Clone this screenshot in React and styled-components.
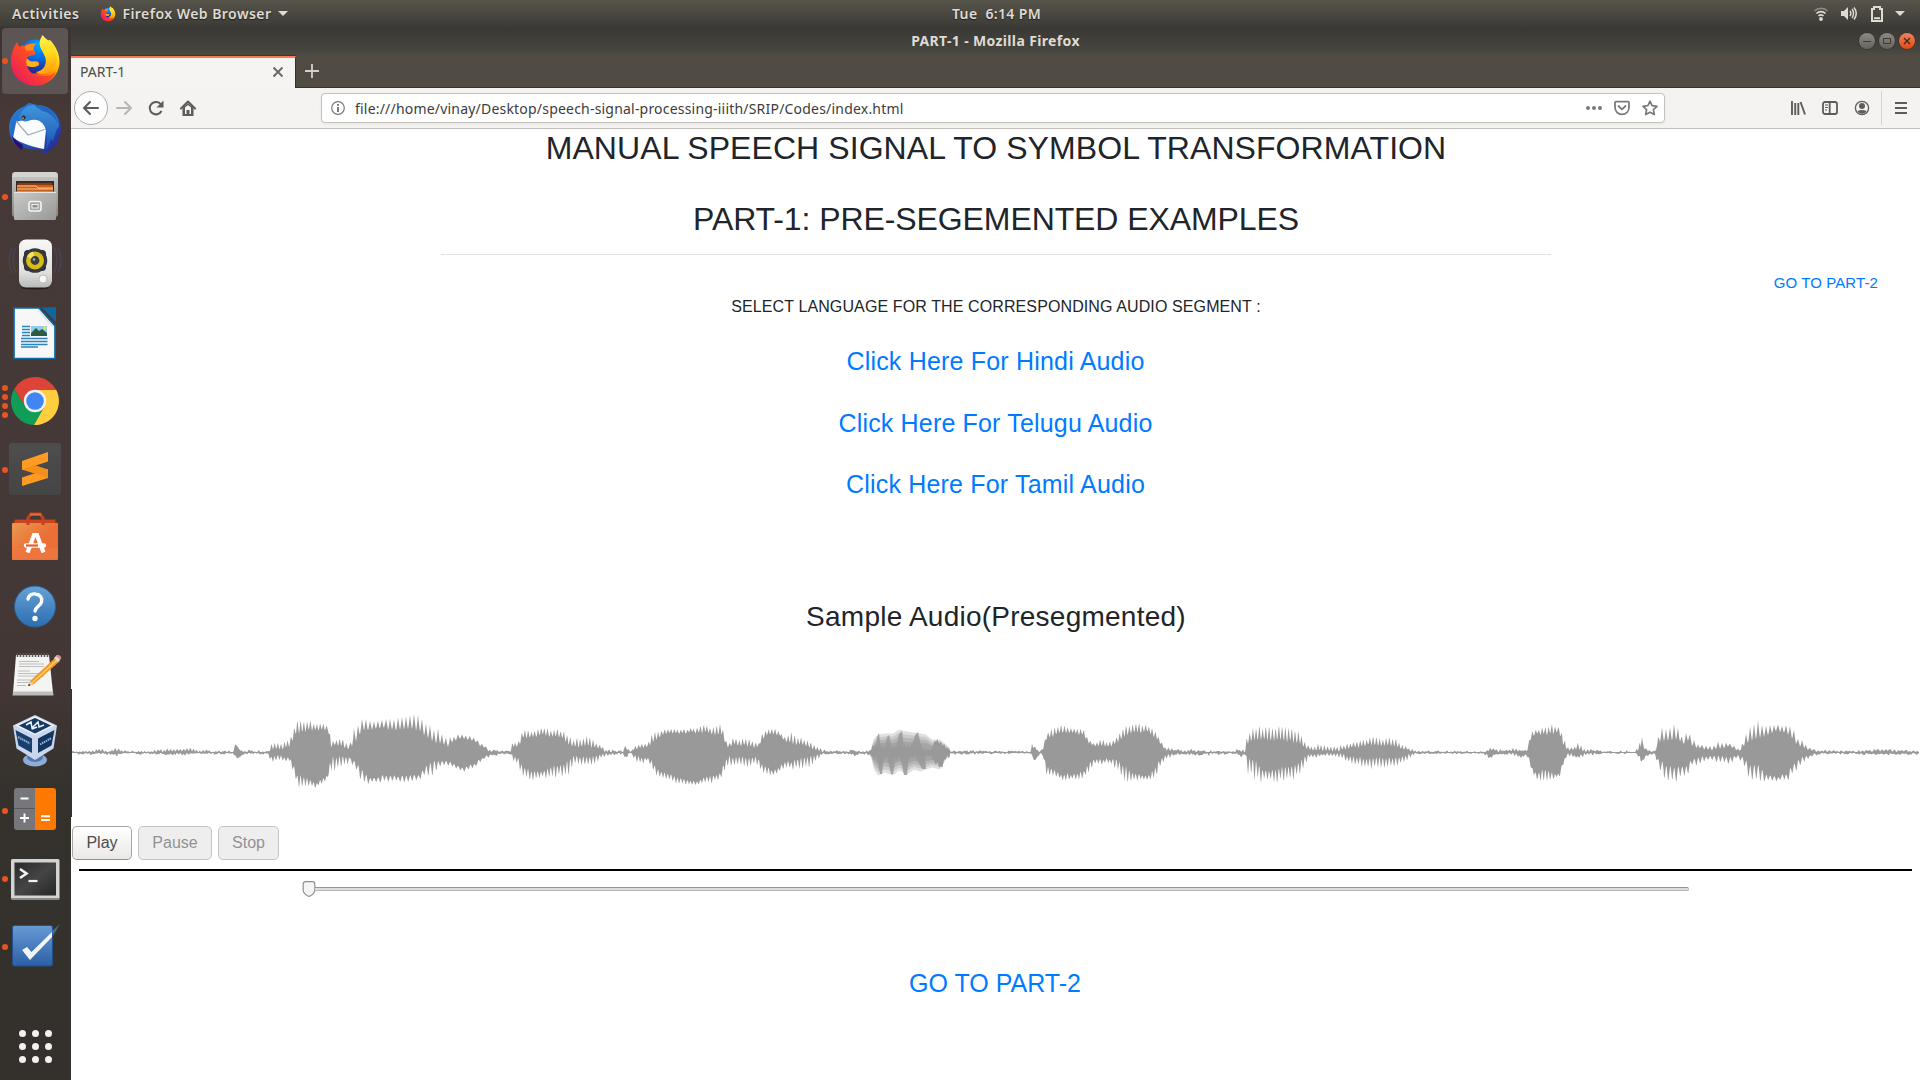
import React from 'react';
import styled, { createGlobalStyle, css } from 'styled-components';

const UI_FONT = '"Noto Sans", "Open Sans", sans-serif';
const PAGE_FONT = '"Liberation Sans", Arial, sans-serif';

const GlobalStyle = createGlobalStyle`
  *, *::before, *::after { box-sizing: border-box; }
  html, body { margin: 0; padding: 0; }
  body { width: 1920px; height: 1080px; overflow: hidden; background: #fff; }
`;

const Desktop = styled.div`
  display: flex;
  flex-direction: column;
  width: 1920px;
  height: 1080px;
  overflow: hidden;
  font-family: ${UI_FONT};
`;

/* ---------- GNOME top bar ---------- */
const TopBar = styled.header`
  display: grid;
  grid-template-columns: 940px auto 1fr;
  align-items: center;
  height: 27px;
  flex: none;
  padding: 0 15px 0 12px;
  background: linear-gradient(#57544a, #3c3b37);
  color: #dfdbd2;
  font-size: 14px;
  font-weight: 600;
  text-shadow: 0 1px 1px rgba(0, 0, 0, 0.5);
`;
const TopGroup = styled.div`
  display: flex;
  align-items: center;
  justify-content: ${(p) => (p.$end ? 'flex-end' : 'flex-start')};
  gap: ${(p) => p.$gap || 0}px;
`;
const Label = styled.span`
  white-space: pre;
  line-height: 20px;
  letter-spacing: ${(p) => p.$track || 0}px;
`;
const AppMenu = styled.div`
  display: flex;
  align-items: center;
  gap: 6px;
  margin-left: 21px;
`;

const Body = styled.div`
  display: flex;
  flex: 1;
  min-height: 0;
`;

/* ---------- Dock ---------- */
const Dock = styled.nav`
  display: flex;
  flex-direction: column;
  width: 71px;
  flex: none;
  background: linear-gradient(#3d3331 0, #463937 90px, #453938 45%, #433735 62%, #35322d 72%, #34312d 100%);
`;
const DockItem = styled.div`
  display: flex;
  align-items: center;
  height: 68.2px;
  flex: none;
  padding: 1px 0 1.2px 2px;
`;
const DockTile = styled.div`
  display: flex;
  align-items: center;
  width: 66px;
  height: 66px;
  border-radius: 4px;
  background: ${(p) => (p.$active ? '#5d5553' : 'transparent')};
`;
const Dots = styled.div`
  display: flex;
  flex-direction: column;
  gap: 3px;
  width: 6px;
`;
const Dot = styled.i`
  width: 6px;
  height: 6px;
  border-radius: 50%;
  background: #e95420;
`;
const IconBox = styled.svg`
  width: 54px;
  height: 54px;
  flex: none;
  overflow: visible;
`;
const AppGrid = styled.div`
  display: grid;
  grid-template-columns: repeat(3, 7px);
  gap: 6px;
  margin: auto auto 17.5px 18.5px;
`;
const GridDot = styled.i`
  width: 7px;
  height: 7px;
  border-radius: 50%;
  background: #f2f1f0;
`;

/* ---------- Browser ---------- */
const Browser = styled.main`
  display: flex;
  flex-direction: column;
  flex: 1;
  min-width: 0;
`;
const TitleBar = styled.div`
  display: grid;
  grid-template-columns: 1fr auto 1fr;
  align-items: center;
  height: 28px;
  flex: none;
  padding: 0 5px 0 5px;
  background: linear-gradient(#393834, #45443f 80%, #4f4b43);
  color: #dfdbd2;
  font-size: 14px;
  font-weight: 700;
`;
const WindowButtons = styled.div`
  grid-column: 3;
  display: flex;
  justify-content: flex-end;
  gap: 4px;
`;
const WindowButton = styled.span`
  width: 16px;
  height: 16px;
  border-radius: 50%;
  background: ${(p) => (p.$close ? 'linear-gradient(#f4815c, #df4b16)' : 'linear-gradient(#8c8a83, #65635c)')};
  box-shadow: 0 0 0 0.6px #2d2c28;
  svg { display: block; }
`;
const TabStrip = styled.div`
  display: flex;
  height: 33px;
  flex: none;
  background: #504c44;
`;
const Tab = styled.div`
  display: flex;
  align-items: center;
  justify-content: space-between;
  width: 225px;
  margin-top: 1px;
  padding: 0 11px 2px 9px;
  border-top: 2px solid #f67c54;
  border-right: 1px solid #33322e;
  background: #f5f4f2;
  box-shadow: 0 -1px 0 #393733;
  color: #4c4c4c;
  font-size: 14px;
`;
const NewTab = styled.div`
  display: flex;
  flex: 1;
  align-items: center;
  padding: 0 0 1px 8px;
  border-bottom: 1px solid #33322e;
`;
const Toolbar = styled.div`
  display: flex;
  align-items: center;
  height: 41px;
  flex: none;
  padding: 0 0 1px 3px;
  background: #f4f3f1;
  border-bottom: 1px solid #c2beb9;
`;
const BackButton = styled.span`
  display: grid;
  place-items: center;
  width: 34px;
  height: 34px;
  border: 1px solid #b1aeab;
  border-radius: 50%;
  background: #fdfdfd;
`;
const NavIcons = styled.div`
  display: flex;
  gap: 16px;
  margin-left: 8px;
`;
const AddressBar = styled.div`
  display: flex;
  align-items: center;
  width: 1344px;
  height: 30px;
  margin-left: 125px;
  padding: 0 6px 0 9px;
  border: 1px solid #c5c1bc;
  border-radius: 4px;
  background: #fff;
  color: #3c3c3c;
  font-size: 14px;
  box-shadow: 0 1px 3px rgba(0, 0, 0, 0.06);
  svg { flex: none; }
`;
const Url = styled(Label)`
  flex: 1;
  margin-left: 10px;
  padding-top: 2px;
`;
const BarIcons = styled.div`
  display: flex;
  gap: 12px;
`;
const ToolIcons = styled.div`
  display: flex;
  gap: 16px;
  margin-left: 125px;
`;
const MenuButton = styled.div`
  display: flex;
  align-items: center;
  height: 34px;
  margin-left: 11px;
  padding-left: 12px;
  border-left: 1px solid #d5d3d0;
`;

/* ---------- Page ---------- */
const Page = styled.section`
  flex: 1;
  min-height: 0;
  overflow: hidden;
  padding-left: 1px;
  background: #fff;
  color: #212529;
  font-family: ${PAGE_FONT};
  text-align: center;
`;
const Heading = styled.h2`
  height: 38px;
  margin: 0 0 33px;
  font-size: 32px;
  font-weight: 400;
  line-height: 38px;
  letter-spacing: ${(p) => p.$track || 0}px;
`;
const Divider = styled.hr`
  width: 1110px;
  height: 1px;
  margin: -17px auto 0;
  border: 0;
  background: #e2e2e3;
`;
const linkText = css`
  color: #007bff;
  text-decoration: none;
`;
const CornerRow = styled.div`
  display: flex;
  justify-content: flex-end;
  height: 18px;
  margin-top: 19px;
  padding-right: 42px;
`;
const CornerLink = styled.a`
  ${linkText}
  font-size: 15px;
  line-height: 18px;
  letter-spacing: 0.1px;
`;
const Prompt = styled.p`
  margin: 3px 0 0;
  font-size: 16px;
  line-height: 24px;
  letter-spacing: 0.11px;
`;
const LinkList = styled.ul`
  display: flex;
  flex-direction: column;
  gap: 32.6px;
  margin: 28px 1px 0 0;
  padding: 0;
  list-style: none;
`;
const BigLink = styled.a`
  ${linkText}
  display: block;
  font-size: 25px;
  line-height: 29px;
  letter-spacing: ${(p) => p.$track || 0}px;
`;
const SampleTitle = styled.h3`
  margin: 101px 0 0;
  font-size: 28px;
  font-weight: 400;
  line-height: 34px;
  letter-spacing: 0.24px;
`;
const Wave = styled.div`
  height: 128px;
  margin: 54.8px 0 0 -1px;
  border-left: 1px solid #333;
  svg { display: block; }
`;
const Controls = styled.div`
  display: flex;
  gap: 6px;
  margin-top: 9px;
`;
const ControlButton = styled.button`
  width: ${(p) => p.$width}px;
  height: 34px;
  padding: 0;
  border: 1px solid #a9a6a2;
  border-bottom-color: #918e8a;
  border-radius: 5px;
  background: linear-gradient(#fff, #ebe9e6);
  color: #4c4c4c;
  font: 16px/24px ${PAGE_FONT};
  &:disabled {
    border-color: #c6c5c4;
    background: #eeeeee;
    color: #929292;
  }
`;
const Rule = styled.hr`
  height: 2px;
  margin: 9px 8px 0 7px;
  border: 0;
  background: #000;
`;
const Slider = styled.div`
  display: flex;
  align-items: center;
  width: 1387px;
  height: 16px;
  margin: 10px 0 0 230px;
`;
const Thumb = styled.svg`
  flex: none;
  width: 14px;
  height: 16px;
`;
const Track = styled.div`
  flex: 1;
  height: 4px;
  margin-left: -1px;
  border: 1px solid #b8b8b8;
  border-top-color: #949494;
  border-left: 0;
  border-radius: 0 2px 2px 0;
  background: #dcdcdc;
`;
const Footer = styled.footer`
  margin: 72px 2px 0 0;
`;

/* ---------- Wave form ---------- */
/* x, up peak, up body, down peak, down body */
const ENVELOPE = [
  [72, 2, 1, 1, 1], [76, 1, 0, 1, 1], [90, 2, 1, 2, 1], [103, 3, 1, 1, 1], [107, 1, 0, 2, 1], [116, 4, 2, 3, 2], [124, 2, 1, 1, 1],
  [150, 1.5, 0, 2, 1], [162, 3, 1, 1.5, 1], [183, 3, 1, 3, 1], [191, 4, 1, 1, 1], [210, 1.5, 0.5, 1.5, 0.5], [233, 1, 0.5, 1, 0.5],
  [235, 7, 6, 3, 2], [237, 8, 7, 6, 5], [239, 3, 2, 5, 4], [242, 2, 1, 4, 3], [245, 1, 0.5, 1, 0.5], [250, 3, 2, 1, 0.5],
  [256, 1, 0.5, 2, 1], [268, 1, 0.5, 1, 0.5], [271, 8, 3, 10, 3], [276, 10, 4, 8, 3], [282, 9, 4, 7, 4], [289, 12, 6, 9, 5],
  [293, 20, 14, 18, 12], [297, 31, 22, 32, 24], [300, 30, 21, 35, 24], [310, 30, 25, 33, 30], [316, 28, 24, 35, 32],
  [322, 30, 25, 32, 29], [328, 27, 24, 25, 24], [331, 13, 5, 17, 4], [334, 10, 7, 18, 5], [341, 14, 8, 14, 4], [349, 7, 3, 11, 4],
  [354, 21, 9, 12, 8], [358, 25, 16, 24, 13], [363, 33, 24, 29, 20], [370, 30, 25, 31, 27], [382, 31, 27, 28, 25],
  [397, 34, 24, 29, 25], [410, 36, 27, 29, 24], [418, 34, 24, 27, 24], [425, 31, 18, 23, 15], [432, 23, 12, 24, 9],
  [440, 20, 9, 15, 9], [448, 12, 7, 12, 8], [454, 16, 13, 16, 12], [464, 18, 15, 18, 16], [474, 14, 12, 15, 12],
  [483, 8, 6, 7, 5], [489, 3, 1, 5, 3], [500, 2, 1, 2, 1], [510, 1, 0.5, 1, 0.5], [513, 11, 6, 8, 2], [518, 10, 6, 12, 6],
  [523, 23, 15, 24, 15], [533, 21, 17, 27, 20], [542, 24, 19, 25, 20], [553, 23, 17, 24, 13], [562, 21, 16, 24, 14],
  [568, 18, 9, 22, 8], [573, 12, 6, 12, 4], [590, 15, 6, 12, 5], [594, 12, 5, 11, 3], [599, 8, 4, 7, 2], [606, 3, 1, 4, 1],
  [612, 2, 1, 3, 1], [618, 1, 0.5, 1, 0.5], [623, 1, 1, 1, 1], [625, 6, 5, 7, 5], [630, 1, 1, 1, 0.5], [637, 7, 4, 9, 3],
  [643, 9, 5, 10, 6], [648, 8, 6, 7, 5], [652, 18, 10, 18, 9], [658, 21, 15, 23, 18], [668, 24, 22, 27, 23], [680, 23, 21, 31, 27],
  [697, 24, 22, 32, 31], [705, 28, 22, 29, 25], [712, 24, 20, 30, 25], [721, 28, 20, 25, 21], [725, 15, 10, 19, 7],
  [728, 8, 5, 13, 4], [734, 14, 8, 12, 5], [744, 13, 7, 14, 5], [756, 10, 5, 11, 4], [759, 9, 6, 13, 8], [763, 21, 15, 20, 13],
  [772, 24, 21, 23, 19], [780, 20, 18, 19, 15], [786, 14, 11, 15, 9], [792, 19, 9, 16, 9], [800, 14, 8, 16, 6],
  [809, 11, 6, 14, 4], [817, 6, 2, 8, 2], [823, 2, 1, 2, 1], [830, 1, 0.5, 1, 0.5], [837, 1.5, 1, 1, 0.5], [849, 1, 0.5, 1, 0.5],
  [851, 5, 3, 2, 1], [855, 1, 0.5, 4, 3], [860, 1, 0.5, 2, 1], [869, 2, 1, 3, 1], [873, 7, 5, 8, 3], [877, 7, 4, 8, 4],
  [888, 6, 4, 7, 4], [900, 8, 5, 8, 4], [920, 7, 4, 6, 4], [931, 3, 2, 4, 2], [935, 13, 12, 12, 9], [941, 11, 9, 17, 14],
  [946, 7, 3, 7, 4], [950, 2, 1, 4, 1], [953, 1, 0.5, 1, 0.5], [962, 1.5, 1, 2, 1], [980, 1.5, 0.5, 1, 0.5], [1030, 0.8, 0.4, 0.8, 0.4],
  [1032, 8, 4, 3, 2], [1035, 5, 4, 10, 8], [1040, 1, 0.5, 1, 0.5], [1043, 5, 4, 4, 3], [1047, 19, 15, 24, 14],
  [1052, 23, 17, 23, 17], [1061, 27, 22, 27, 23], [1072, 24, 22, 27, 23], [1084, 23, 19, 26, 20], [1089, 12, 9, 18, 9],
  [1095, 8, 6, 11, 7], [1102, 14, 7, 12, 7], [1110, 10, 5, 10, 7], [1117, 16, 11, 15, 8], [1125, 25, 17, 29, 14],
  [1133, 29, 22, 27, 22], [1147, 26, 22, 27, 25], [1156, 21, 15, 24, 16], [1160, 12, 9, 13, 7], [1165, 6, 3, 8, 3],
  [1172, 4, 2, 4, 1], [1181, 2, 1, 2, 1], [1192, 3, 1, 3, 1], [1199, 2, 1, 3, 2], [1207, 1, 0.5, 2, 1], [1233, 1, 0.5, 1, 0.5],
  [1238, 3, 2, 3, 2], [1241, 2, 1, 5, 4], [1245, 2, 1, 2, 1], [1247, 16, 8, 18, 4], [1252, 24, 12, 24, 6], [1257, 26, 13, 28, 10],
  [1263, 24, 13, 27, 20], [1277, 24, 13, 29, 17], [1293, 24, 11, 25, 13], [1300, 18, 9, 21, 9], [1306, 8, 4, 10, 3],
  [1310, 6, 3, 5, 2], [1320, 8, 2, 4, 1], [1333, 5, 1, 3, 1], [1341, 6, 2, 6, 1], [1350, 9, 5, 11, 4], [1360, 11, 6, 13, 5],
  [1368, 14, 8, 14, 6], [1377, 15, 7, 15, 5], [1387, 14, 7, 14, 5], [1397, 12, 6, 13, 5], [1404, 7, 3, 9, 3], [1413, 3, 1, 3, 1],
  [1420, 1, 0.5, 1, 0.5], [1441, 1.5, 0.5, 1, 0.5], [1470, 0.8, 0.4, 0.8, 0.4], [1485, 1, 0.5, 2, 1], [1490, 4, 2, 6, 4],
  [1495, 3, 1, 2, 1], [1508, 2, 1, 2, 1], [1514, 4, 2, 3, 1], [1521, 3, 1, 5, 3], [1527, 2, 2, 3, 2], [1529, 11, 8, 9, 6],
  [1532, 22, 18, 20, 16], [1537, 22, 20, 27, 24], [1544, 25, 20, 27, 16], [1553, 27, 20, 27, 22], [1559, 24, 22, 25, 22],
  [1563, 18, 8, 13, 9], [1567, 6, 3, 4, 1], [1571, 4, 2, 4, 1], [1577, 9, 3, 6, 4], [1585, 4, 1, 3, 1], [1594, 2, 1, 1.5, 1],
  [1610, 1, 0.5, 1, 0.5], [1635, 0.8, 0.4, 0.8, 0.4], [1637, 6, 2, 3, 1], [1640, 9, 3, 5, 3], [1642, 13, 8, 12, 9], [1645, 5, 3, 5, 3],
  [1648, 2, 1, 3, 1], [1655, 2, 1, 3, 1], [1657, 9, 6, 9, 4], [1660, 22, 12, 18, 8], [1668, 22, 12, 30, 14], [1676, 26, 14, 28, 15],
  [1683, 14, 9, 22, 15], [1688, 20, 12, 21, 12], [1692, 13, 8, 13, 8], [1698, 8, 4, 12, 4], [1705, 7, 4, 8, 4], [1712, 5, 2, 8, 3],
  [1720, 10, 4, 9, 4], [1730, 9, 7, 12, 5], [1737, 4, 2, 5, 2], [1741, 5, 2, 8, 4], [1745, 15, 8, 14, 7], [1750, 24, 12, 27, 12],
  [1759, 28, 15, 27, 13], [1765, 26, 18, 28, 23], [1777, 27, 24, 28, 26], [1787, 25, 20, 28, 22], [1793, 25, 14, 21, 13],
  [1798, 13, 8, 15, 8], [1804, 10, 5, 9, 4], [1810, 4, 2, 5, 2], [1818, 2, 1, 2, 1], [1826, 2, 1, 1.5, 0.5], [1845, 1.5, 0.5, 1.5, 0.5],
  [1860, 1.5, 1, 2, 1], [1877, 3, 1, 2, 1], [1890, 2.5, 1, 2, 1], [1905, 2, 1, 2, 1], [1919, 1.5, 0.5, 1.5, 0.5],
];

const BASELINE = 63.5;

/* Repeatable value in 0..1 for an integer */
const jitter = (n) => {
  const v = Math.sin(n * 127.1 + 11.7) * 43758.5453;
  return v - Math.floor(v);
};

/* Triangular tooth, each with its own height */
const spike = (x, period, phase) => {
  const pos = (x + phase) / period;
  const i = Math.floor(pos);
  const shape = 1 - Math.abs(pos - i - 0.5) * 2;
  return shape ** 1.2 * (0.95 + 0.35 * jitter(i + Math.round(phase * 10)));
};

function buildWave() {
  const top = [];
  const bottom = [];
  let k = 0;
  for (let x = 72; x <= 1919; x += 0.5) {
    while (k < ENVELOPE.length - 2 && ENVELOPE[k + 1][0] < x) k += 1;
    const a = ENVELOPE[k];
    const b = ENVELOPE[k + 1];
    const t = (x - a[0]) / (b[0] - a[0]);
    const at = (i) => a[i] + (b[i] - a[i]) * t;
    const period = x > 1640 || (x > 350 && x < 500) ? 4 : 3.25;
    const grainUp = (jitter(Math.floor(x / 2)) - 0.45) * 1.8;
    const grainDown = (jitter(Math.floor(x / 2) + 5000) - 0.5) * 1.8;
    const bodyUp = at(2) * 0.9;
    const bodyDown = at(4) * 0.93;
    const up = bodyUp + (at(1) - bodyUp) * spike(x, period, 0) + grainUp;
    const down = bodyDown + (at(3) - bodyDown) * spike(x, period, 1.7) + grainDown;
    top.push(`${x - 72},${(BASELINE - Math.max(up, 0.5)).toFixed(1)}`);
    bottom.push(`${x - 72},${(BASELINE + Math.max(down, 0.5)).toFixed(1)}`);
  }
  return `M${top.join('L')}L${bottom.reverse().join('L')}Z`;
}
const WAVE_PATH = buildWave();

/* Pale columns of the blurred burst: x, up, down */
const HAZE_EDGE = [
  [871, 3, 4], [874, 13, 17], [878, 18, 23], [885, 18, 20], [893, 19, 23], [899, 22, 18], [907, 21, 22], [914, 19, 17],
  [920, 19, 19], [926, 17, 17], [932, 13, 15], [940, 12, 17], [946, 8, 7], [950, 3, 4],
];
const hazePath = (scale) => {
  const up = HAZE_EDGE.map(([x, u], i) => `${x - 72},${BASELINE - u * scale - (i % 2)}`);
  const down = HAZE_EDGE.map(([x, , d]) => `${x - 72},${BASELINE + d * scale}`).reverse();
  return `M${up.join('L')}L${down.join('L')}Z`;
};
const HAZE_SPIKES = 'M803 60l2-12 2-4 2 16zM813 60l2-12 2-2 3 14zM824 60l3-15 3-3 2 18zM839 60l4-14 3-3 4 17zM804 66l4 19h2l2-19zM815 66l4 19h2l3-19zM828 66l4 20h3l2-20zM843 66l7 14h4l-1-14z';

function Waveform() {
  return (
    <svg width="1848" height="128" viewBox="0 0 1848 128">
      <g fill="#999">
        <path d={hazePath(1)} opacity=".3" />
        <path d={hazePath(0.84)} opacity=".3" />
        <path d={hazePath(0.68)} opacity=".4" />
        <path d={hazePath(0.5)} opacity=".6" />
        <path d={HAZE_SPIKES} opacity=".85" />
        <path d={WAVE_PATH} />
      </g>
    </svg>
  );
}

/* ---------- Icons ---------- */
function FirefoxArt({ id }) {
  return (
    <>
      <defs>
        <radialGradient id={`${id}b`} cx=".6" cy=".15" r=".9">
          <stop offset="0" stopColor="#00a5ff" /><stop offset=".5" stopColor="#0766de" /><stop offset="1" stopColor="#2b1a80" />
        </radialGradient>
        <linearGradient id={`${id}o`} x1=".95" y1=".15" x2=".1" y2=".85">
          <stop offset="0" stopColor="#fff13f" /><stop offset=".3" stopColor="#ffb400" /><stop offset=".55" stopColor="#ff6f16" />
          <stop offset=".78" stopColor="#fd2a3c" /><stop offset="1" stopColor="#c90e88" />
        </linearGradient>
        <linearGradient id={`${id}f`} x1=".4" y1="0" x2=".6" y2="1">
          <stop offset="0" stopColor="#fff44f" /><stop offset=".5" stopColor="#ffd91c" /><stop offset="1" stopColor="#ff9a0c" />
        </linearGradient>
        <linearGradient id={`${id}r`} x1="1" y1="0" x2="0" y2="1">
          <stop offset="0" stopColor="#ff9320" /><stop offset=".45" stopColor="#ff4a24" /><stop offset="1" stopColor="#e3116c" />
        </linearGradient>
      </defs>
      <path d="M42 6c5 5 10 14 9.500 23C50.500 42 40 51.500 27 51.500S3 41 3 28c0-4 1-9 4-13z" fill={`url(#${id}o)`} />
      <circle cx="27" cy="22.500" r="17" fill={`url(#${id}b)`} />
      <path d="M34.700 1c-3 4-4 9-2 13 2 5 6 9 5 15-1 5-5 8.500-10 9C35 43 45 38 48 30c1-5 0-15-4-20C41 6 37 5 34.700 1z" fill={`url(#${id}f)`} />
      <path d="M9.700 7.700C6.500 11 3 18 3 28c0 13 11 23.500 24 23.500 10 0 18-6 21-14C42 43 36 43 30 41.500c-6-1-10-5-11-10 4 2 8 2 12-1 .500-3-2-4-5-3.500-3 .5-6-.5-7-3 1-2 3-2 7-3 2-1 2-4-1-5 0-3 1-5 3-6-5-1-10 0-12 2-2-1-3 0-4 1-2-1-2.500-3-2.300-5.300z" fill={`url(#${id}r)`} />
      <path d="M19 32c3 1 8 2 12-1 .5-3-2-4-5-3.500-3 .5-5-.5-7-3-1 2-1 5 0 7.500z" fill="#ffb020" />
      <path d="M26 16c-1-3 1-5 2.500-6.300-4-.6-8 .3-10.500 2-2 1-1 4 1 5z" fill="#ff8a1c" />
    </>
  );
}

const art = {
  firefox: <FirefoxArt id="fx" />,
  thunderbird: (
    <>
      <defs>
        <linearGradient id="tb" x1="0" y1="0" x2="1" y2="1">
          <stop offset="0" stopColor="#2a84d8" /><stop offset=".5" stopColor="#1f5fbf" /><stop offset="1" stopColor="#2b1f8a" />
        </linearGradient>
        <linearGradient id="tw" x1="0" y1="0" x2="0" y2="1"><stop offset="0" stopColor="#3f97dc" /><stop offset="1" stopColor="#1a4fb0" /></linearGradient>
      </defs>
      <path d="M21 1c-2 1-3 2-4 3C7 7 1 16 1 26c0 10 6 19 14 22l-2-4c8 4 18 5 24 4l-4 3c3 1 8-1 11-4 6-5 9-13 9-21C53 13 42 3 29 3c-3-1-6-2-8-2z" fill="url(#tb)" />
      <path d="M5 36L8 21c3-3 8-3 14-3 5-1 9-3 13-2 3 2 4 6 3 12l-2 19c-11-2-21-5-31-11z" fill="#fbfcfd" />
      <path d="M8 19l12 14 18-6" fill="none" stroke="#a5adb5" strokeWidth="1.200" />
      <path d="M11 17c1-8 7-14 15-14 14 0 25 9 25 21l-3 5 1-3-4 13-2-2-5 12c1-10 2-21-3-27-3-4-7-5-12-4-4 1-6 3-12-1z" fill="url(#tw)" />
      <path d="M26 3c12-1 23 7 24 20-3-8-9-13-16-14-3-3-6-4-8-6z" fill="#2565bd" />
      <circle cx="15.500" cy="15.500" r="2" fill="#182a4d" /><circle cx="15" cy="16" r=".9" fill="#f08a28" />
      <path d="M4 34c4 4 7 7 11 9l-1 5C9 45 5 41 4 34z" fill="#2c0e72" />
    </>
  ),
  files: (
    <>
      <defs>
        <linearGradient id="fa" x1="0" y1="0" x2="0" y2="1"><stop offset="0" stopColor="#c8c8c6" /><stop offset="1" stopColor="#888886" /></linearGradient>
        <linearGradient id="fb" x1="0" y1="0" x2="1" y2="1"><stop offset="0" stopColor="#c9c9c7" /><stop offset="1" stopColor="#989896" /></linearGradient>
      </defs>
      <rect x="4" y="2" width="46" height="45" rx="3" fill="url(#fa)" />
      <path d="M7 2h40l3 5H4z" fill="#d4d4d0" />
      <path d="M8 11h38v13H8z" fill="#3b2a20" />
      <path d="M10 13h34v4H10z" fill="#8d3b0c" /><path d="M9 15h36v7H9z" fill="#c8601b" />
      <path d="M9 16h19l2 2h15M9 19h36" stroke="#f6c38d" fill="none" />
      <rect x="6" y="21.500" width="42" height="28.500" rx="1.500" fill="url(#fb)" />
      <path d="M6 22.500h42" stroke="#e5e5e3" />
      <rect x="21" y="31.500" width="12" height="9.500" rx="2" fill="#a9a9a7" stroke="#f4f4f2" strokeWidth="1.600" />
      <rect x="24" y="34.500" width="6" height="3.500" fill="#8c8c8a" stroke="#f4f4f2" />
    </>
  ),
  rhythmbox: (
    <>
      <defs>
        <linearGradient id="ra" x1="0" y1="0" x2="0" y2="1"><stop offset="0" stopColor="#f8f8f7" /><stop offset=".7" stopColor="#dededc" /><stop offset="1" stopColor="#b9b9b7" /></linearGradient>
      </defs>
      <g fill="none" stroke="#4a506b" strokeWidth="1.300" opacity=".6">
        <path d="M4 9c-4 9-4 17 0 25M8 8c-4 9-4 17 0 26M50 9c4 9 4 17 0 25M46 8c4 9 4 17 0 26" />
      </g>
      <ellipse cx="27" cy="49" rx="14" ry="1.500" fill="#241d1c" />
      <rect x="11" y=".5" width="33" height="48" rx="7" fill="url(#ra)" />
      <rect x="16" y="11" width="22" height="21" rx="4" fill="#2a2c2f" />
      <circle cx="27" cy="21.500" r="12.300" fill="#35383c" />
      <circle cx="27" cy="21.500" r="9" fill="#d8bd16" /><path d="M27 21.500l-8-4a9 9 0 0 1 6-5z" fill="#f3e36a" />
      <circle cx="27" cy="21.500" r="4.400" fill="#3a3d41" /><circle cx="26" cy="20.500" r="1.300" fill="#a9acae" />
      <circle cx="35" cy="40" r="4" fill="#f7f7f6" stroke="#bfbfbd" /><circle cx="16" cy="40" r="1.500" fill="#d0d0ce" />
    </>
  ),
  writer: (
    <>
      <path d="M6 1h25l16 18v32.500H6z" fill="#f7f7f7" stroke="#0a6aa6" strokeWidth="1.700" />
      <path d="M33.500.2H48V15z" fill="#10679f" />
      <path d="M30 2l16 17.500-3-.5L30 4z" fill="#dfe4e8" />
      <path d="M14 19.500h8M14 22.500h8M14 25.500h8M14 28.500h8M13 31.500h26.500M13 34.500h26.500M13 37.500h26.500M13 40h17" stroke="#2b84bd" strokeWidth="1.500" />
      <rect x="23" y="19" width="16" height="10" fill="#8fd0f2" />
      <path d="M23 29v-3l5-5 3 3 3-2 5 4v3z" fill="#2d5c42" /><circle cx="37" cy="21" r="1.400" fill="#ffd83d" />
    </>
  ),
  chrome: (
    <>
      <path d="M27 15h21.300A24 24 0 0 0 6.200 14L17 31.500z" fill="#db4437" />
      <path d="M17 31.500L6.200 14A24 24 0 0 0 26 50l10.500-18.500z" fill="#0f9d58" />
      <path d="M36.500 31.500L26 50A24 24 0 0 0 48.300 15H27z" fill="#ffcd40" />
      <circle cx="27" cy="26" r="11.200" fill="#f1f1f1" /><circle cx="27" cy="26" r="8.800" fill="#4285f4" />
    </>
  ),
  sublime: (
    <>
      <defs><linearGradient id="sa" x1="0" y1="0" x2="0" y2="1"><stop offset="0" stopColor="#4d4d4d" /><stop offset="1" stopColor="#454545" /></linearGradient></defs>
      <rect x="1" y="0" width="52" height="52" rx="3" fill="url(#sa)" />
      <path d="M14 18l26-9v9.500l-26 8.500z" fill="#ff9b22" />
      <path d="M14 34.500l26-8.500v9l-26 8z" fill="#ff9b22" />
      <path d="M14 18v8.500l26 8.500v-8.500z" fill="#f58f1b" />
      <path d="M14 18v8.500l14-5z" fill="#ff9b22" />
    </>
  ),
  software: (
    <>
      <defs><linearGradient id="so" x1="0" y1="0" x2="1" y2="1"><stop offset="0" stopColor="#e99a52" /><stop offset=".5" stopColor="#ec7136" /><stop offset="1" stopColor="#e86b35" /></linearGradient></defs>
      <path d="M4 13l3-5h40l3 5z" fill="#9b3014" /><path d="M7 9h40v3H7z" fill="#c9451f" />
      <rect x="4" y="12" width="46" height="37" rx="1" fill="url(#so)" />
      <path d="M4 37h46v11.500H4z" fill="#f07c45" opacity=".5" />
      <path d="M20 14V7l3-4h9l3 4v7" fill="none" stroke="#c8411c" strokeWidth="3" /><path d="M22 3.500h11" stroke="#e96b3a" strokeWidth="2" />
      <path d="M19.500 41.500L26 24h3l6.500 17.500" fill="none" stroke="#fff" strokeWidth="4.200" />
      <path d="M18 34.500h18" stroke="#fff" strokeWidth="4.400" strokeLinecap="round" /><path d="M18 34.500h12" stroke="#e85e2b" strokeWidth="2.200" />
    </>
  ),
  help: (
    <>
      <defs><linearGradient id="ha" x1="0" y1="0" x2="0" y2="1"><stop offset="0" stopColor="#66a2d6" /><stop offset="1" stopColor="#2b6db0" /></linearGradient></defs>
      <circle cx="27" cy="26.500" r="20.500" fill="url(#ha)" stroke="#2b6196" />
      <path d="M20 19c1-4 4-5.500 7.500-5 5 .5 7 4 6 8-1 3.500-6 5-6.500 9" fill="none" stroke="#fff" strokeWidth="3.400" strokeLinecap="round" />
      <circle cx="27" cy="38.500" r="2.700" fill="#fff" />
    </>
  ),
  editor: (
    <>
      <path d="M8 7h33l4 38H5z" fill="#f4f4f3" /><path d="M5 43.500h40l.5 4H4.500z" fill="#bcbcba" />
      <path d="M9.500 5v4M12.500 5v4M15.500 5v4M18.500 5v4M21.500 5v4M24.500 5v4M27.500 5v4M30.500 5v4M33.500 5v4M36.500 5v4M39.500 5v4" stroke="#565553" strokeWidth="1.500" />
      <path d="M11 13.500h20M11 16h25M11 18.500h25M10 23h12M10 25.500h26M10 28h26M9 32h14M9 34.500h12M9 37.500h9" stroke="#bdbdbb" strokeWidth="1" />
      <path d="M20 38l2-5 26-24 4 4-26 23z" fill="#f09a29" /><path d="M24 35L50 11" stroke="#ffca6b" strokeWidth="1.600" />
      <path d="M20 38l2-5 4 3.500z" fill="#e8cfa6" /><path d="M20 38l1-2.300 1.600 1.500z" fill="#222" />
      <path d="M46 10l3-3 4 3.500-3 3.500z" fill="#d9dada" /><path d="M48.500 7.500c2-1.500 5.500 1 4.500 3l-1 1-4-3.500z" fill="#dd8a8f" />
    </>
  ),
  virtualbox: (
    <>
      <ellipse cx="27" cy="44" rx="12" ry="6.500" fill="#8eacd7" /><ellipse cx="27" cy="41" rx="8" ry="5" fill="#5277ac" />
      <path d="M27-1l22 10.500-3.500 23L27 44 8.500 32.500 5 9.500z" fill="#c8d7ed" />
      <path d="M27 1l18 8.500-18 9-18-9z" fill="#153a66" stroke="#eef4fb" strokeWidth="1.400" />
      <path d="M18 9l5-3 1 6 6-6 1 5 5-2M24 13l5-2" stroke="#eef4fb" strokeWidth="1.500" fill="none" />
      <path d="M7.500 14L24 22.500V37L10.500 29.500z" fill="#173f70" /><path d="M46.500 14L30 22.500V37l13.500-7.500z" fill="#133660" />
      <path d="M10 21l12 6.500" stroke="#9fb9d9" strokeWidth="2" strokeDasharray="1.500 .7" /><path d="M32 28.500l11.500-6.500" stroke="#9fb9d9" strokeWidth="2" strokeDasharray="1.500 .7" />
    </>
  ),
  calculator: (
    <>
      <path d="M9 4h18v42H9a3 3 0 0 1-3-3V7a3 3 0 0 1 3-3z" fill="#77767b" />
      <path d="M27 4h18a3 3 0 0 1 3 3v36a3 3 0 0 1-3 3H27z" fill="#ff7800" />
      <path d="M6 24.500h21" stroke="#5a595d" />
      <path d="M12.500 14.500h8M12 34h9M16.500 29.500v9M33 32.300h9M33 36h9" stroke="#fff" strokeWidth="1.900" />
    </>
  ),
  terminal: (
    <>
      <defs><linearGradient id="ta" x1="0" y1="0" x2="1" y2="1"><stop offset="0" stopColor="#2a2a2a" /><stop offset=".5" stopColor="#454545" /><stop offset="1" stopColor="#262626" /></linearGradient></defs>
      <rect x="3" y="7" width="48.500" height="40.500" rx="1.500" fill="#d3d3d1" /><path d="M3 46h48.500v1.500H3z" fill="#8a8a88" />
      <rect x="6.500" y="10.500" width="41.500" height="33" fill="url(#ta)" />
      <path d="M12 17l6.500 4.500-6.500 4.500" fill="none" stroke="#f2f2f2" strokeWidth="2.600" /><path d="M20.500 29h9" stroke="#f2f2f2" strokeWidth="2.200" />
    </>
  ),
  todo: (
    <>
      <defs><linearGradient id="ca" x1="0" y1="0" x2="0" y2="1"><stop offset="0" stopColor="#679bd4" /><stop offset="1" stopColor="#2c5fa5" /></linearGradient></defs>
      <rect x="4.500" y="5.500" width="40" height="40.500" rx="2" fill="url(#ca)" stroke="#224f8d" />
      <path d="M44 11l8-7-7 12z" fill="#5d8bb5" opacity=".6" />
      <path d="M14 30l5-3 4.500 5L44 12v5L22 40z" fill="#f3f4f5" />
    </>
  ),
};

const DOCK = [
  ['firefox', 1, true], ['thunderbird', 0], ['files', 1], ['rhythmbox', 0], ['writer', 0], ['chrome', 4], ['sublime', 1],
  ['software', 0], ['help', 0], ['editor', 0], ['virtualbox', 0], ['calculator', 1], ['terminal', 1], ['todo', 1],
];

const Caret = () => (<svg width="10" height="5" viewBox="0 0 10 5"><path d="M0 0h10L5 5z" fill="#dfdbd2" /></svg>);

function StatusIcons() {
  return (
    <>
      <svg width="16" height="16" viewBox="0 0 16 16" fill="none" stroke="#dfdbd2" strokeWidth="1.600">
        <path d="M1.500 5c3.500-3.500 9.500-3.500 13 0" stroke="#8e8b82" /><path d="M3.500 7.500c2.500-2.500 6.500-2.500 9 0M5.500 10c1.500-1.400 3.500-1.400 5 0" />
        <circle cx="8" cy="13" r="1.900" fill="#dfdbd2" stroke="none" />
      </svg>
      <svg width="19" height="16" viewBox="0 0 19 16" fill="none" stroke="#dfdbd2" strokeWidth="1.500">
        <path d="M1 5h3l4-4v13l-4-4H1z" fill="#dfdbd2" stroke="none" /><path d="M10 5c1 1.500 1 3.500 0 5M12 3c2 2.500 2 6.500 0 9M14 1.500c3 4 3 8 0 12" />
      </svg>
      <svg width="14" height="18" viewBox="0 0 14 18" fill="none" stroke="#dfdbd2" strokeWidth="2">
        <path d="M4 4V2h6v2h2v12H2V4z" /><path d="M4 13.200h6" />
      </svg>
      <Caret />
    </>
  );
}

export default function App() {
  return (
    <Desktop>
      <GlobalStyle />
      <TopBar>
        <TopGroup>
          <Label $track={0.5}>Activities</Label>
          <AppMenu>
            <svg width="16" height="16" viewBox="0 0 54 54"><FirefoxArt id="fs" /></svg>
            <Label $track={0.46}>Firefox Web Browser</Label>
            <Caret />
          </AppMenu>
        </TopGroup>
        <Label $track={0.35}>Tue  6:14 PM</Label>
        <TopGroup $end $gap={11}><StatusIcons /></TopGroup>
      </TopBar>
      <Body>
        <Dock>
          {DOCK.map(([name, count, active]) => (
            <DockItem key={name}>
              <DockTile $active={active}>
                <Dots>{Array.from({ length: count }, (_, i) => <Dot key={i} />)}</Dots>
                <IconBox viewBox="0 0 54 54">{art[name]}</IconBox>
              </DockTile>
            </DockItem>
          ))}
          <AppGrid>{Array.from({ length: 9 }, (_, i) => <GridDot key={i} />)}</AppGrid>
        </Dock>
        <Browser>
          <TitleBar>
            <span />
            <Label $track={0.36}>PART-1 - Mozilla Firefox</Label>
            <WindowButtons>
              <WindowButton><svg width="16" height="16"><path d="M4 8.500h8" stroke="#3c3b37" /></svg></WindowButton>
              <WindowButton><svg width="16" height="16"><path d="M4.500 5.500h7v5h-7z" fill="none" stroke="#3c3b37" /></svg></WindowButton>
              <WindowButton $close><svg width="16" height="16"><path d="M5 5l6 6M11 5l-6 6" stroke="#3c2a20" strokeWidth="1.300" /></svg></WindowButton>
            </WindowButtons>
          </TitleBar>
          <TabStrip>
            <Tab>
              <Label>PART-1</Label>
              <svg width="12" height="12" viewBox="0 0 12 12"><path d="M1.500 1.500l9 9M10.500 1.500l-9 9" stroke="#666" strokeWidth="1.800" /></svg>
            </Tab>
            <NewTab><svg width="16" height="16" viewBox="0 0 16 16"><path d="M8 1v14M1 8h14" stroke="#d4d1ca" strokeWidth="1.800" /></svg></NewTab>
          </TabStrip>
          <Toolbar>
            <BackButton>
              <svg width="18" height="16" viewBox="0 0 18 16" fill="none" stroke="#5a5a5a" strokeWidth="2" strokeLinecap="round"><path d="M2 8h14M8 2L2 8l6 6" /></svg>
            </BackButton>
            <NavIcons>
              <svg width="16" height="16" viewBox="0 0 16 16" fill="none" stroke="#b7b6b5" strokeWidth="2" strokeLinecap="round"><path d="M1 8h14M9 2l6 6-6 6" /></svg>
              <svg width="16" height="16" viewBox="0 0 16 16" fill="none" stroke="#5c5c5c" strokeWidth="2"><path d="M13.500 11A6.200 6.200 0 1 1 13 4.500" /><path d="M15.500.5v7h-7z" fill="#5c5c5c" stroke="none" /></svg>
              <svg width="16" height="16" viewBox="0 0 16 16"><path d="M1 8.500L8 1.500l7 7" fill="none" stroke="#5c5c5c" strokeWidth="2" strokeLinejoin="round" strokeLinecap="round" /><path d="M2.500 8L8 3l5.500 5v8h-11zM5 7.500V14h1.500v-4h3v4H11V7.500L8 5z" fillRule="evenodd" fill="#5c5c5c" /><path d="M7 11h2v4H7z" fill="#5c5c5c" /></svg>
            </NavIcons>
            <AddressBar>
              <svg width="14" height="14" viewBox="0 0 14 14"><circle cx="7" cy="7" r="6.300" fill="none" stroke="#7b7b7b" strokeWidth="1.200" /><path d="M7 6v5M7 3v1.800" stroke="#6b6b6b" strokeWidth="1.800" /></svg>
              <Url $track={0.2}>file:///home/vinay/Desktop/speech-signal-processing-iiith/SRIP/Codes/index.html</Url>
              <BarIcons>
                <svg width="16" height="16" viewBox="0 0 16 16" fill="#7a7a7a"><circle cx="2" cy="8" r="2" /><circle cx="8" cy="8" r="2" /><circle cx="14" cy="8" r="2" /></svg>
                <svg width="16" height="16" viewBox="0 0 16 16" fill="none" stroke="#7a7a7a" strokeWidth="1.800" strokeLinecap="round" strokeLinejoin="round"><path d="M2 1.700h12c.7 0 1 .3 1 1V7c0 4.500-3 7.300-7 7.300S1 11.500 1 7V2.700c0-.7.300-1 1-1z" /><path d="M4.500 6L8 9.300 11.500 6" /></svg>
                <svg width="16" height="16" viewBox="0 0 16 16" fill="none" stroke="#7a7a7a" strokeWidth="1.700" strokeLinejoin="round"><path d="M8 1.200l2.100 4.500 4.900.6-3.600 3.400.9 4.900L8 12.200l-4.300 2.400.9-4.900L1 6.300l4.900-.6z" /></svg>
              </BarIcons>
            </AddressBar>
            <ToolIcons>
              <svg width="16" height="16" viewBox="0 0 16 16" stroke="#5c5c5c" strokeWidth="1.900"><path d="M2 1v14M5.200 3v12M8.300 3v12M10.500 2l4.500 12.500" /></svg>
              <svg width="16" height="16" viewBox="0 0 16 16" fill="none" stroke="#5c5c5c" strokeWidth="1.800"><rect x="1" y="2" width="14" height="12" rx="2" /><path d="M7.700 2v12" /><path d="M3 5h3M3 7.500h3M3 10h2" strokeWidth="1" /></svg>
              <svg width="16" height="16" viewBox="0 0 16 16"><circle cx="8" cy="8" r="6.600" fill="none" stroke="#5c5c5c" strokeWidth="1.300" /><circle cx="8" cy="6" r="3" fill="#5c5c5c" /><path d="M3.500 11c3-1.500 6-1.500 9 0-1 2-2.500 2.700-4.500 2.700S4.500 13 3.500 11z" fill="#5c5c5c" /></svg>
            </ToolIcons>
            <MenuButton>
              <svg width="14" height="14" viewBox="0 0 14 14"><path d="M1 2h12M1 7h12M1 12h12" stroke="#5c5c5c" strokeWidth="2" /></svg>
            </MenuButton>
          </Toolbar>
          <Page>
            <Heading $track={0.07}>MANUAL SPEECH SIGNAL TO SYMBOL TRANSFORMATION</Heading>
            <Heading $track={-0.09}>PART-1: PRE-SEGEMENTED EXAMPLES</Heading>
            <Divider />
            <CornerRow><CornerLink>GO TO PART-2</CornerLink></CornerRow>
            <Prompt>SELECT LANGUAGE FOR THE CORRESPONDING AUDIO SEGMENT :</Prompt>
            <LinkList>
              <li><BigLink $track={0.19}>Click Here For Hindi Audio</BigLink></li>
              <li><BigLink $track={0.17}>Click Here For Telugu Audio</BigLink></li>
              <li><BigLink $track={0.19}>Click Here For Tamil Audio</BigLink></li>
            </LinkList>
            <SampleTitle>Sample Audio(Presegmented)</SampleTitle>
            <Wave><Waveform /></Wave>
            <Controls>
              <ControlButton $width={60}>Play</ControlButton>
              <ControlButton $width={74} disabled>Pause</ControlButton>
              <ControlButton $width={61} disabled>Stop</ControlButton>
            </Controls>
            <Rule />
            <Slider>
              <Thumb viewBox="0 0 14 16"><path d="M3.500.7h7c1.500 0 2.300 1 2.300 2.500V9.500c0 2-3.500 5.800-5.800 5.800S1.200 11.500 1.200 9.500V3.200C1.200 1.700 2 .7 3.500.7z" fill="#f6f5f4" stroke="#8f8f8f" strokeWidth="1.200" /></Thumb>
              <Track />
            </Slider>
            <Footer><BigLink>GO TO PART-2</BigLink></Footer>
          </Page>
        </Browser>
      </Body>
    </Desktop>
  );
}
